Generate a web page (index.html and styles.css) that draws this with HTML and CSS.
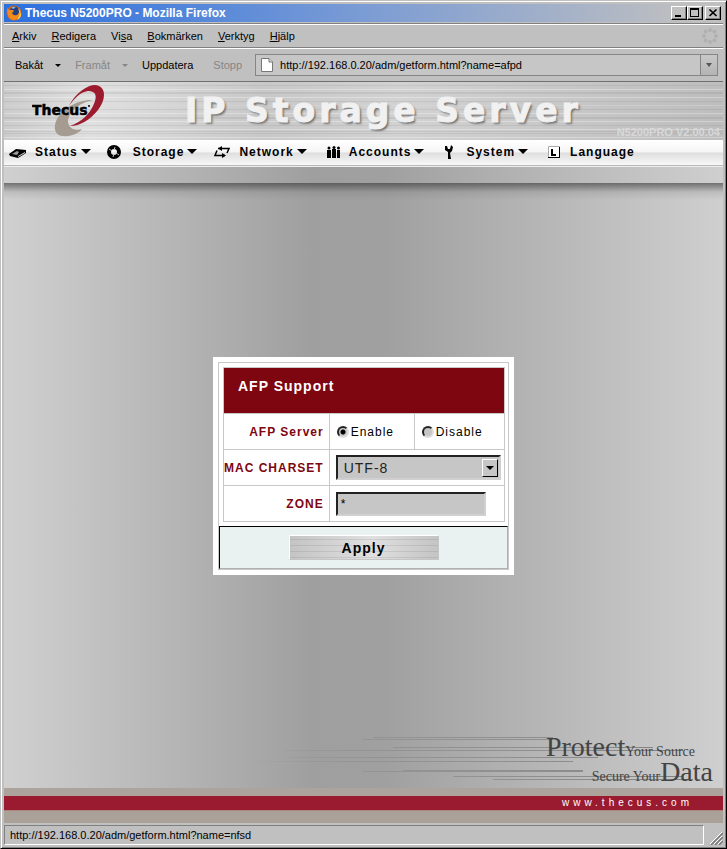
FILE: index.html
```
<!DOCTYPE html>
<html lang="sv">
<head>
    <meta charset="UTF-8">
    <title>Thecus N5200PRO - Mozilla Firefox</title>
    <link rel="stylesheet" href="styles.css">
</head>
<body>
<div class="window">

    <div class="titlebar">
        <svg class="fox" width="16" height="16" viewBox="0 0 16 16">
            <circle cx="8" cy="8" r="7.5" fill="#d8640c"/>
            <circle cx="8.5" cy="6.5" r="5" fill="#23407f"/>
            <path d="M5 3q2-2 5-1q-2 1-2 2z" fill="#7fb4e0"/>
            <path d="M1 3q1 2 3 2q2-1 4 1l-2 2q1 3 5 2q3-2 2-7q3 4 1 8q-2 4-7 4q-6-1-6-12z" fill="#f28a1c"/>
            <path d="M12 3q3 3 1 7q2-1 2-3q1 6-4 8q4-5 1-12z" fill="#fbd24a"/>
        </svg>
        <span class="title">Thecus N5200PRO - Mozilla Firefox</span>
        <div class="winbuttons">
            <button type="button" aria-label="Minimera">
                <svg width="12" height="10" viewBox="0 0 12 10"><path d="M2 7h6v2H2z"/></svg>
            </button>
            <button type="button" aria-label="Maximera">
                <svg width="12" height="10" viewBox="0 0 12 10"><path d="M1 0h9v9H1zM2 2v6h7V2z" fill-rule="evenodd"/></svg>
            </button>
            <button type="button" class="close" aria-label="Stäng">
                <svg width="12" height="10" viewBox="0 0 12 10"><path d="M2.500 1.500l7 6.500M9.500 1.500l-7 6.500" stroke="#000" stroke-width="1.700"/></svg>
            </button>
        </div>
    </div>

    <div class="menubar">
        <a href="#"><u>A</u>rkiv</a>
        <a href="#"><u>R</u>edigera</a>
        <a href="#">Vi<u>s</u>a</a>
        <a href="#"><u>B</u>okmärken</a>
        <a href="#"><u>V</u>erktyg</a>
        <a href="#"><u>H</u>jälp</a>
        <svg class="throbber" width="16" height="16" viewBox="0 0 16 16" fill="#b0b0b0">
            <circle cx="8" cy="2" r="2"/><circle cx="12.500" cy="3.500" r="2"/>
            <circle cx="14" cy="8" r="2"/><circle cx="12.500" cy="12.500" r="2"/>
            <circle cx="8" cy="14" r="2"/><circle cx="3.500" cy="12.500" r="2"/>
            <circle cx="2" cy="8" r="2"/><circle cx="3.500" cy="3.500" r="2"/>
        </svg>
    </div>

    <div class="toolbar">
        <button type="button" class="tool back">Bakåt <i class="tri"></i></button>
        <button type="button" class="tool forward" disabled>Framåt <i class="tri"></i></button>
        <button type="button" class="tool reload">Uppdatera</button>
        <button type="button" class="tool stop" disabled>Stopp</button>
        <div class="address">
            <svg width="12" height="14" viewBox="0 0 12 14">
                <path d="M.5.500h7.500l3.500 3.500v9.500H.5z" fill="#fff" stroke="#777"/>
                <path d="M8 .500v3.500h3.500" fill="#ddd" stroke="#777"/>
            </svg>
            <input type="text" aria-label="Adress" value="http://192.168.0.20/adm/getform.html?name=afpd">
            <button type="button" class="drop" aria-label="Visa adresser"><i class="tri"></i></button>
        </div>
    </div>

    <div class="page">
        <div class="header">
            <svg class="logo" width="76" height="54" viewBox="0 0 76 54">
                <path d="M61 16C46 15 30 25 25 35C20 45 24 52 31 52C39 53 47 49 50 45C43 47 37 45 36 38C36 29 46 19 61 16z" fill="#a59b90"/>
                <path d="M37 22C44 8 56 1 63 1C75 2 74 16 66 26C58 36 48 42 38 42C50 38 57 30 61 22C66 12 64 7 56 7C48 8 42 15 37 22z" fill="#9c1b2f"/>
                <text x="0" y="31" class="logo-text">Thecus</text>
                <circle cx="57" cy="22" r="1"/>
            </svg>
            <h1>IP Storage Server</h1>
            <span class="version">N5200PRO V2.00.04</span>
        </div>

        <div class="nav">
            <a href="#">
                <svg width="18" height="16" viewBox="0 0 18 16">
                    <path d="M0 10l7-5 10 1v3l-8 5-8-2z"/>
                    <path d="M3 10l5-3 2 1-2 3z" fill="#999"/><path d="M9 12l7-4v1l-7 4z" fill="#ddd"/>
                </svg>
                Status <i class="tri"></i></a>
            <a href="#">
                <svg width="18" height="16" viewBox="0 0 18 16">
                    <circle cx="7" cy="8" r="5" fill="none" stroke="#000" stroke-width="4"/>
                    <path d="M2 5l3 2M9 9l3 2M6 13l1-3M8 3l-1 3" stroke="#bbb"/>
                </svg>
                Storage <i class="tri"></i></a>
            <a href="#">
                <svg width="18" height="16" viewBox="0 0 18 16">
                    <path d="M5 4.500H16L14 9M12 11.500H2L4 6.500" fill="none" stroke="#000" stroke-width="1.500"/>
                    <path d="M9 2v5L5 4.500zM9 9v5l4-2.500z"/>
                </svg>
                Network <i class="tri"></i></a>
            <a href="#">
                <svg width="18" height="16" viewBox="0 0 18 16">
                    <path d="M4 6h4v8H4zM9 5h4v9H9zM14 6h3v8h-3z"/>
                    <circle cx="6" cy="4" r="1.500"/><circle cx="11" cy="3.500" r="1.500"/><circle cx="15.500" cy="4" r="1.500"/>
                </svg>
                Accounts <i class="tri"></i></a>
            <a href="#">
                <svg width="18" height="16" viewBox="0 0 18 16">
                    <path d="M5 2l2 0 1 3 2 0 1-4 2 2-1 4-2 2 1 6H8l0-7-3-2z"/>
                </svg>
                System <i class="tri"></i></a>
            <a href="#">
                <svg width="18" height="16" viewBox="0 0 18 16">
                    <path d="M4.500 2.500h11v11h-11z" fill="#fff" stroke="#aaa"/>
                    <path d="M4 13h11V3h1v11H4zM7 5h2v5h3v2H7z"/>
                </svg>
                Language</a>
        </div>

        <div class="band"></div>

        <div class="content">
            <form class="panel" action="#">
                <div class="frame">
                    <table>
                        <tr>
                            <th class="heading" colspan="3">AFP Support</th>
                        </tr>
                        <tr>
                            <th class="name">AFP Server</th>
                            <td class="radio"><label><input type="radio" name="afp" checked>Enable</label></td>
                            <td class="radio last"><label><input type="radio" name="afp">Disable</label></td>
                        </tr>
                        <tr>
                            <th class="name"><label for="charset">MAC CHARSET</label></th>
                            <td colspan="2">
                                <div class="selectbox">
                                    <select id="charset"><option>UTF-8</option></select>
                                    <span class="arrow"><i class="tri"></i></span>
                                </div>
                            </td>
                        </tr>
                        <tr>
                            <th class="name"><label for="zone">ZONE</label></th>
                            <td colspan="2"><input class="zone" id="zone" type="text" value="*"></td>
                        </tr>
                    </table>
                    <div class="actions">
                        <button type="submit" class="apply">Apply</button>
                    </div>
                </div>
            </form>

            <div class="slogan">
                <svg class="streaks" width="480" height="50" viewBox="0 0 480 50">
                    <defs>
                        <linearGradient id="fade" gradientUnits="userSpaceOnUse" x1="0" y1="0" x2="480" y2="0">
                            <stop offset="0" stop-color="#666" stop-opacity="0"/>
                            <stop offset="1" stop-color="#666" stop-opacity="0.8"/>
                        </linearGradient>
                    </defs>
                    <g fill="url(#fade)">
                        <path d="M130 2h180v1H130zM120 4h190v1H120zM150 12h260v1H150zM40 15h400v1H40zM45 22h310v1H45zM0 26h330v1H0zM160 35h180v1H160zM120 36h220v1H120zM210 41h230v1H210zM250 44h200v1H250z"/>
                    </g>
                </svg>
                <p class="protect"><big>Protect</big>Your Source</p>
                <p>Secure Your<big>Data</big></p>
            </div>
        </div>

        <div class="footer"><a href="#">www.thecus.com</a></div>
    </div>

    <div class="statusbar">
        <div class="status">http://192.168.0.20/adm/getform.html?name=nfsd</div>
        <svg width="14" height="14" viewBox="0 0 14 14" fill="none">
            <path d="M1 13L13 1M5 13l8-8M9 13l4-4" stroke="#fff"/>
            <path d="M2 14L14 2M6 14l8-8M10 14l4-4" stroke="#777" stroke-width="1.500"/>
        </svg>
    </div>
</div>
</body>
</html>
```
FILE: styles.css
```
* {
    box-sizing: border-box;
}

body {
    margin: 0;
    font-family: "Liberation Sans", Arial, sans-serif;
    font-size: 11px;
    color: #000;
}

a {
    color: inherit;
    text-decoration: none;
}

button {
    font: inherit;
    color: inherit;
}

.window {
    display: flex;
    flex-direction: column;
    min-height: 100vh;
    padding: 3px 3px 2px 3px;
    background: #c0c0c0;
    border: 1px solid #c0c0c0;
    border-right-color: #000;
    border-bottom-color: #000;
    box-shadow: inset 1px 1px #fff, inset -1px -1px #808080;
}

.tri {
    display: inline-block;
    border: 3px solid transparent;
    border-top-color: currentColor;
    border-bottom: 0;
}

/* window title */
.titlebar {
    display: flex;
    align-items: center;
    height: 18px;
    padding: 0 2px;
    background: linear-gradient(to right, #2a6fe0, #7b9cd4 50%, #c0c0c0 96%);
}

.title {
    flex: 1;
    margin-left: 3px;
    font-size: 12px;
    font-weight: bold;
    color: #fff;
}

.winbuttons {
    display: flex;
}

.winbuttons button {
    width: 16px;
    height: 14px;
    padding: 1px;
    line-height: 0;
    background: #c0c0c0;
    border: 1px solid;
    border-color: #fff #000 #000 #fff;
    box-shadow: inset -1px -1px #808080;
}

.winbuttons .close {
    margin-left: 2px;
}

.menubar {
    display: flex;
    align-items: center;
    gap: 15px;
    height: 25px;
    margin-top: 1px;
    padding: 0 5px 0 8px;
    border-top: 1px solid #808080;
    border-bottom: 1px solid #808080;
    box-shadow: inset 0 1px #fff, 0 1px #fff;
}

.throbber {
    margin-left: auto;
}

.toolbar {
    display: flex;
    align-items: center;
    height: 32px;
    margin-top: 1px;
    padding: 0 5px 0 11px;
}

.tool {
    display: flex;
    align-items: center;
    padding: 0;
    background: none;
    border: 0;
}

.tool:disabled {
    color: #868686;
}

.tool .tri {
    margin-left: 12px;
}

.back,
.forward {
    margin-right: 14px;
}

.reload {
    margin-right: 20px;
}

.address {
    display: flex;
    flex: 1;
    align-items: center;
    height: 22px;
    margin-left: 13px;
    padding-left: 5px;
    background: #c6c6c6;
    border: 1px solid #858585;
}

.address input {
    flex: 1;
    min-width: 0;
    margin-left: 7px;
    padding: 0;
    font: inherit;
    background: none;
    border: 0;
}

.drop {
    display: flex;
    align-items: center;
    justify-content: center;
    width: 17px;
    height: 20px;
    padding: 0;
    color: #555;
    background: linear-gradient(#c8c8c8, #b4b4b4);
    border: 0;
    border-left: 1px solid #858585;
}

.drop .tri {
    border-width: 4px 3px 0;
}

/* web page */
.page {
    display: flex;
    flex: 1;
    flex-direction: column;
    border-top: 1px solid #707070;
    background: linear-gradient(to right, #d0d0d0, #9f9f9f 43%, #a0a0a0 53%, #cfcfcf);
}

.header {
    display: flex;
    position: relative;
    height: 58px;
    padding-left: 28px;
    background:
        repeating-linear-gradient(transparent 0 3px, rgba(80, 80, 80, 0.1) 3px 4px, transparent 4px 7px, rgba(255, 255, 255, 0.3) 7px 8px),
        repeating-linear-gradient(transparent 0 10px, rgba(80, 80, 80, 0.1) 10px 11px, transparent 11px 13px),
        linear-gradient(to right, #ccc, #e0e0e0 12%, #c8c8c8 36%, #d2d2d2 55%, #bdbdbd);
}

.logo {
    margin-top: 2px;
}

.logo-text {
    font: bold 14px "DejaVu Sans", sans-serif;
    stroke: #000;
    stroke-width: 0.5px;
}

.header h1 {
    margin: 0 0 0 77px;
    font: bold 33px/58px "DejaVu Sans", sans-serif;
    letter-spacing: 4px;
    white-space: nowrap;
    color: #f1f1f1;
    -webkit-text-stroke: 1px #f1f1f1;
    text-shadow: 2px 2px 2px #777;
}

.version {
    position: absolute;
    right: 3px;
    bottom: 2px;
    font-size: 11px;
    font-weight: bold;
    line-height: 12px;
    color: #d8d8d8;
}

.nav {
    display: flex;
    gap: 16px;
    height: 26px;
    padding: 0 5px 2px;
    background: linear-gradient(#fff, #f5f5f5 48%, #dedede 52%, #f8f8f8);
    border-bottom: 1px solid #b8b8b8;
    font-size: 12px;
    font-weight: bold;
    letter-spacing: 1px;
}

.nav a {
    display: flex;
    align-items: center;
}

.nav svg {
    margin-right: 8px;
}

.nav .tri {
    margin-left: 3px;
    border-width: 5px 5px 0;
}

.band {
    height: 17px;
    border-top: 1px solid #eee;
}

.content {
    display: flex;
    flex: 1;
    flex-direction: column;
    align-items: center;
    padding-top: 174px;
    background: linear-gradient(rgba(50, 50, 50, 0.6), rgba(90, 90, 90, 0.15) 9px, rgba(90, 90, 90, 0) 17px);
}

.panel {
    width: 301px;
    padding: 5px;
    background: #fff;
}

.frame {
    border: 1px solid #c8c8c8;
}

.panel table {
    width: 281px;
    margin: 4px;
    border-collapse: collapse;
}

.panel th,
.panel td {
    height: 36px;
    padding: 0 3px 0 6px;
    border: 1px solid #c8c8c8;
}

.panel .heading {
    height: 46px;
    padding: 10px 14px;
    font-size: 14px;
    line-height: 16px;
    letter-spacing: 1px;
    text-align: left;
    vertical-align: top;
    color: #fff;
    background: #7d0610;
}

.panel .name {
    width: 105px;
    padding: 0 5px 0 0;
    font-size: 12px;
    letter-spacing: 1px;
    text-align: right;
    white-space: nowrap;
    color: #7d0610;
}

.radio {
    width: 85px;
    font-size: 12px;
    letter-spacing: 1px;
}

.radio.last {
    width: 90px;
}

.radio label {
    display: flex;
    align-items: center;
}

.radio input {
    appearance: none;
    width: 12px;
    height: 12px;
    margin: 0 2px 0 1px;
    background: #c6c6c6;
    border: 2px solid;
    border-color: #222 #ddd #ddd #222;
    border-radius: 50%;
}

.radio input:checked {
    background: radial-gradient(#000 2px, #c6c6c6 3px);
}

.selectbox {
    position: relative;
    width: 165px;
}

.selectbox select {
    appearance: none;
    display: block;
    width: 100%;
    height: 25px;
    padding: 0 6px;
    font: 14px "Liberation Sans", Arial, sans-serif;
    letter-spacing: 1px;
    color: #222;
}

.selectbox select,
.zone {
    background: #c6c6c6;
    border: 2px solid;
    border-color: #222 #d0d0d0 #d0d0d0 #222;
    border-radius: 0;
}

.arrow {
    position: absolute;
    top: 4px;
    right: 3px;
    display: flex;
    align-items: center;
    justify-content: center;
    width: 16px;
    height: 18px;
    background: #c6c6c6;
    border: 1px solid;
    border-color: #fff #000 #000 #fff;
    pointer-events: none;
}

.arrow .tri {
    border-width: 4px 4px 0;
}

.zone {
    display: block;
    width: 150px;
    height: 24px;
    padding: 0 3px;
    font: 12px "Liberation Sans", Arial, sans-serif;
}

.actions {
    display: flex;
    justify-content: center;
    padding: 8px 0;
    background: #e9f2f0;
    border: 1px solid;
    border-color: #000 #b0b0b0 #b0b0b0 #000;
}

.apply {
    width: 150px;
    height: 25px;
    padding: 0;
    font-size: 14px;
    font-weight: bold;
    letter-spacing: 1px;
    background:
        repeating-linear-gradient(transparent 0 3px, rgba(100, 100, 100, 0.15) 3px 4px, transparent 4px 6px),
        linear-gradient(to right, #c4c4c4, #e0e0e0 55%, #c4c4c4);
    border: 1px solid;
    border-color: #fff #c6c6c6 #c6c6c6 #fff;
}

.slogan {
    position: relative;
    align-self: flex-end;
    margin-top: auto;
    padding: 0 10px 5px 0;
    font: 14px/23px "Liberation Serif", "Times New Roman", serif;
    text-align: right;
    color: #444;
}

.slogan p {
    position: relative;
    margin: 0;
    height: 23px;
}

.slogan .protect {
    height: 25px;
    padding-right: 18px;
}

.slogan big {
    font-size: 28px;
}

.streaks {
    position: absolute;
    right: 0;
    top: 0;
}

.footer {
    height: 35px;
    padding: 0 30px;
    border-top: 8px solid #aca39d;
    font-size: 10px;
    line-height: 14px;
    letter-spacing: 4px;
    text-align: right;
    color: #fff;
    background: linear-gradient(#9a1a30 14px, #ab837f 14px 15px, #aaa298 15px);
}

.statusbar {
    display: flex;
    align-items: flex-end;
    justify-content: space-between;
    height: 23px;
    padding: 2px 0 1px;
}

.status {
    width: calc(100% - 19px);
    height: 20px;
    padding-left: 5px;
    line-height: 18px;
    border: 1px solid;
    border-color: #808080 #fff #fff #808080;
}
```
